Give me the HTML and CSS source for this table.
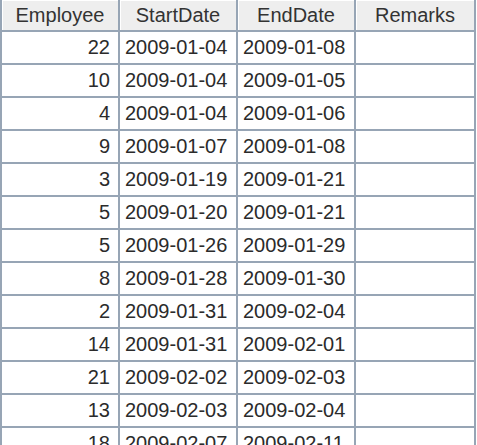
FILE: index.html
```html
<!DOCTYPE html>
<html>
<head>
<meta charset="utf-8">
<link rel="stylesheet" href="styles.css">
</head>
<body>
<div class="grid">
  <div class="row head">
    <div class="cell c1">Employee</div>
    <div class="cell c2">StartDate</div>
    <div class="cell c3">EndDate</div>
    <div class="cell c4">Remarks</div>
  </div>
  <div class="row"><div class="cell c1 num">22</div><div class="cell c2">2009-01-04</div><div class="cell c3">2009-01-08</div><div class="cell c4"></div></div>
  <div class="row"><div class="cell c1 num">10</div><div class="cell c2">2009-01-04</div><div class="cell c3">2009-01-05</div><div class="cell c4"></div></div>
  <div class="row"><div class="cell c1 num">4</div><div class="cell c2">2009-01-04</div><div class="cell c3">2009-01-06</div><div class="cell c4"></div></div>
  <div class="row"><div class="cell c1 num">9</div><div class="cell c2">2009-01-07</div><div class="cell c3">2009-01-08</div><div class="cell c4"></div></div>
  <div class="row"><div class="cell c1 num">3</div><div class="cell c2">2009-01-19</div><div class="cell c3">2009-01-21</div><div class="cell c4"></div></div>
  <div class="row"><div class="cell c1 num">5</div><div class="cell c2">2009-01-20</div><div class="cell c3">2009-01-21</div><div class="cell c4"></div></div>
  <div class="row"><div class="cell c1 num">5</div><div class="cell c2">2009-01-26</div><div class="cell c3">2009-01-29</div><div class="cell c4"></div></div>
  <div class="row"><div class="cell c1 num">8</div><div class="cell c2">2009-01-28</div><div class="cell c3">2009-01-30</div><div class="cell c4"></div></div>
  <div class="row"><div class="cell c1 num">2</div><div class="cell c2">2009-01-31</div><div class="cell c3">2009-02-04</div><div class="cell c4"></div></div>
  <div class="row"><div class="cell c1 num">14</div><div class="cell c2">2009-01-31</div><div class="cell c3">2009-02-01</div><div class="cell c4"></div></div>
  <div class="row"><div class="cell c1 num">21</div><div class="cell c2">2009-02-02</div><div class="cell c3">2009-02-03</div><div class="cell c4"></div></div>
  <div class="row"><div class="cell c1 num">13</div><div class="cell c2">2009-02-03</div><div class="cell c3">2009-02-04</div><div class="cell c4"></div></div>
  <div class="row"><div class="cell c1 num">18</div><div class="cell c2">2009-02-07</div><div class="cell c3">2009-02-11</div><div class="cell c4"></div></div>
</div>
</body>
</html>
```
FILE: styles.css
```css
html, body {
  margin: 0;
  padding: 0;
  background: #ffffff;
  overflow: hidden;
}
.grid {
  width: 476px;
  border-left: 2px solid #97a5b5;
  box-sizing: border-box;
  font-family: "Liberation Sans", Arial, sans-serif;
  font-size: 20px;
  color: #2b2b2b;
}
.row {
  display: flex;
  height: 33px;
}
.cell {
  box-sizing: border-box;
  height: 100%;
  border-right: 2px solid #97a5b5;
  border-bottom: 2px solid #97a5b5;
  display: flex;
  align-items: center;
  padding: 0 5px;
  white-space: nowrap;
  overflow: hidden;
}
.c1 { width: 118px; }
.c2 { width: 118px; }
.c3 { width: 118px; }
.c4 { width: 120px; }
.num { justify-content: flex-end; padding-right: 8px; }
.head {
  height: 32px;
}
.head .cell {
  background: #eeeeee;
  justify-content: center;
  color: #333333;
  box-shadow: inset 1px 1px 0 #ffffff;
}
```
